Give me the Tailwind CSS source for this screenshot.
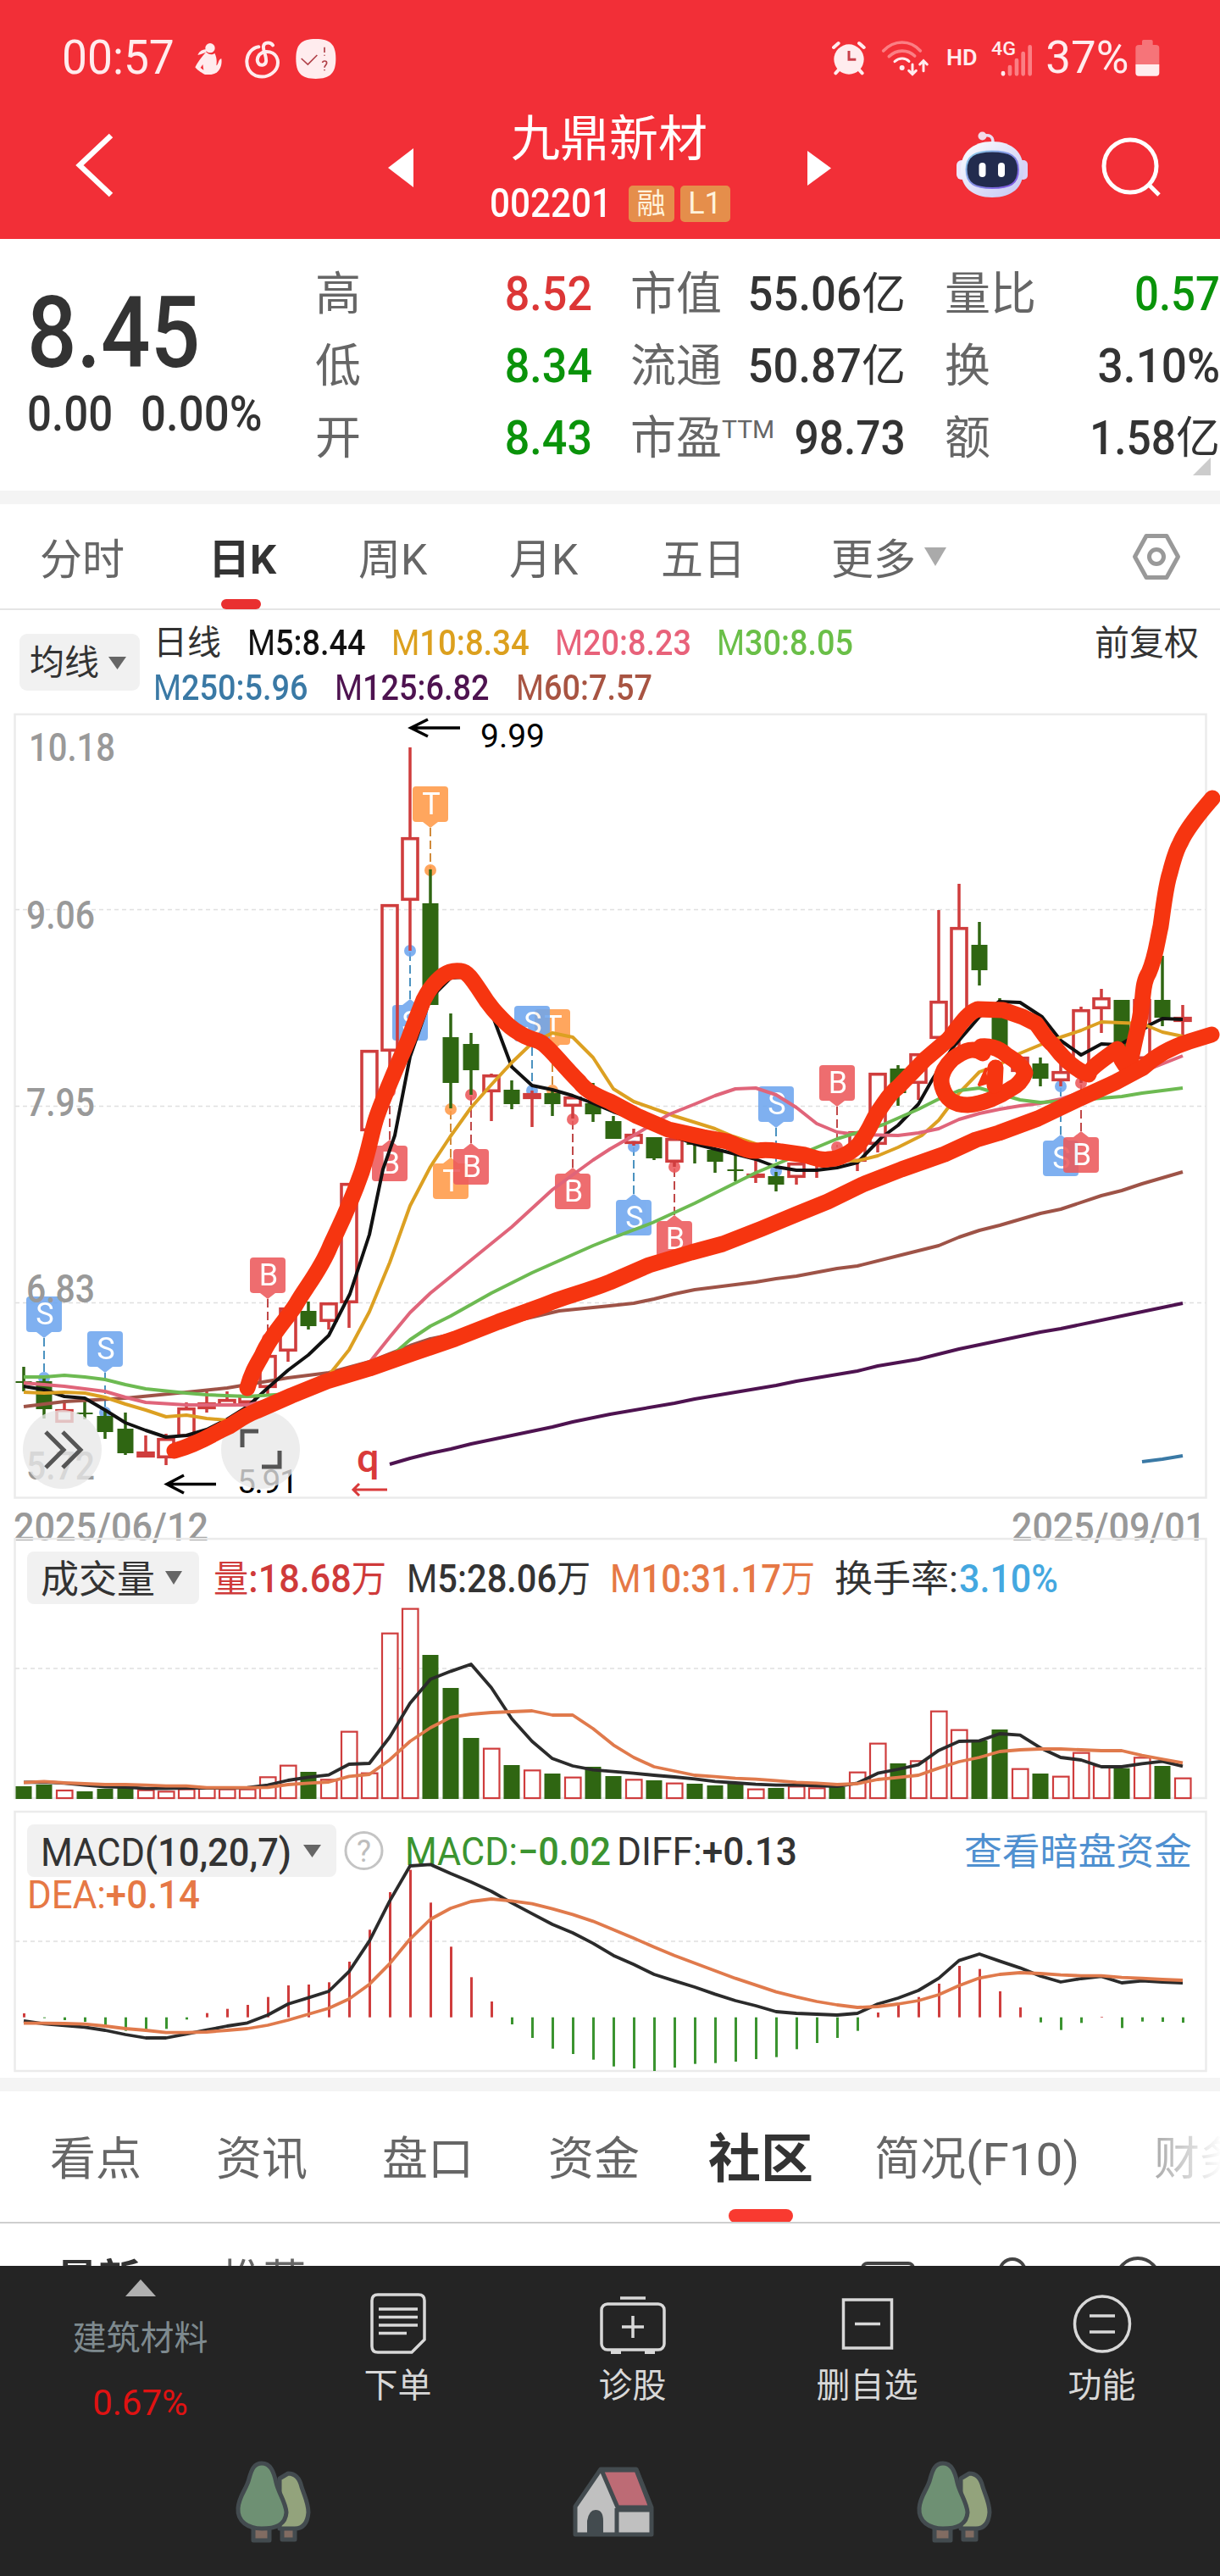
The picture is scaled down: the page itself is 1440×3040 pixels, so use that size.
<!DOCTYPE html>
<html lang="zh-CN">
  <head>
    <meta charset="UTF-8" />
    <meta name="viewport" content="width=device-width, initial-scale=1.0" />
    <title>九鼎新材 002201</title>
    <script src="https://cdn.jsdelivr.net/npm/@tailwindcss/browser@4"></script>
  </head>
  <body class="bg-white">
    <div class="w-[1440px] h-[3040px] overflow-hidden flex flex-col bg-white text-[#333] font-['Roboto','Noto_Sans_CJK_SC',sans-serif]">

      <!-- Header -->
      <header class="h-[282px] shrink-0 bg-[#f22f37] text-white">
        <div class="h-[134px] pt-[40px] flex items-start justify-between text-[#ffecee]">
          <div class="flex items-start pl-[73px]">
            <span class="w-[153px] text-[55px] leading-[56px] whitespace-nowrap origin-left scale-x-[.97]">00:57</span>
            <svg class="w-[176px] h-[54px]" viewBox="500 30 528 162" fill="none">
              <g fill="#ffecee">
                <circle cx="566" cy="80" r="17" />
                <path d="M522 104C530 88 545 82 556 86L550 96C540 98 534 105 522 104Z" />
                <path d="M552 94C560 104 574 106 582 98C590 112 590 130 588 142C596 140 595 118 606 118C610 145 596 172 570 174H548C532 166 518 156 513 148C522 130 536 112 552 94Z" />
                <path d="M540 138L532 150L543 158Z" fill="#f22f37" />
                <path d="M940 48C992 48 1011 68 1011 118S992 189 940 189S870 168 870 118S888 48 940 48Z" />
              </g>
              <path d="M738 76C688 84 680 158 728 178C772 192 812 160 805 122C798 92 760 84 740 104C726 122 736 142 752 140C768 138 766 120 760 100C752 78 752 66 766 62C776 60 784 64 788 70" stroke="#ffecee" stroke-width="12" stroke-linecap="round" />
              <path d="M889 117L912 138L945 105M971 77V96M971 104V107M964 132C965 124 979 124 979 133C979 140 971 141 971 149M971 156V160" stroke="#b04048" stroke-width="5" />
            </svg>
          </div>
          <svg class="w-[400px] h-[54px] mr-[68px]" viewBox="35 30 1200 162" fill="none">
            <g stroke="#ffecee" stroke-width="12" stroke-linecap="round">
              <circle cx="125" cy="120" r="53" fill="#ffecee" stroke="none" />
              <path d="M71 78L88 63M178 78L161 63M88 158L78 169M162 158L172 169" />
              <path d="M125 90V121H150" stroke="#c8404a" stroke-width="9" stroke-linecap="butt" />
            </g>
            <g stroke-linecap="round" stroke-width="11">
              <path d="M247 90C285 50 342 50 378 90M267 110C294 84 332 84 358 108" stroke="#fb7f84" />
              <path d="M287 128C303 113 325 114 338 127M350 138V172M337 160L350 173L363 160M389 161V127M376 138L389 125L402 138" stroke="#ffecee" stroke-width="9" />
            </g>
            <circle cx="313" cy="150" r="9" fill="#ffecee" />
            <text x="470" y="142" font-size="80" font-weight="600" fill="#ffecee" textLength="110" lengthAdjust="spacingAndGlyphs">HD</text>
            <text x="629" y="104" font-size="66" font-weight="500" fill="#ffecee" textLength="87" lengthAdjust="spacingAndGlyphs">4G</text>
            <g stroke="#fb7f84" stroke-width="14" stroke-linecap="round">
              <path d="M695 147V172M719 123V172M742 99V172M766 76V172" />
              <path d="M671 168V172" stroke="#ffecee" />
            </g>
            <text x="822" y="168" font-size="162" fill="#ffecee" textLength="294" lengthAdjust="spacingAndGlyphs">37%</text>
            <path d="M1163 69V56Q1163 51 1168 51H1196Q1201 51 1201 56V69H1212Q1224 69 1224 80V138H1140V80Q1140 69 1152 69Z" fill="#f67479" />
            <path d="M1140 138H1224V168Q1224 179 1213 179H1151Q1140 179 1140 168Z" fill="#ffecee" />
          </svg>
        </div>
        <div class="flex h-[148px] items-start">
          <svg class="ml-[86px] mt-[20px] w-[50px] h-[82px]" viewBox="86 154 50 82" fill="none">
            <path d="M131 160L94 195L131 230" stroke="#fff" stroke-width="6.5" />
          </svg>
          <svg class="ml-[322px] mt-[41px] w-[30px] h-[46px]" viewBox="0 0 30 46"><path d="M30 0V46L0 23Z" fill="#fff" /></svg>
          <div class="w-[465px] flex flex-col items-center">
            <h1 class="text-[58px] leading-[61px] mr-[3px]">九鼎新材</h1>
            <div class="mt-[20px] flex w-[286px] items-center gap-[7px]">
              <span class="w-[157px] text-[48px] leading-[50px] font-medium origin-left scale-x-[.88]">002201</span>
              <span class="w-[54px] h-[43px] rounded-[5px] bg-[#e58e4b] text-[#fff3dc] text-[34px] leading-[43px] text-center shrink-0">融</span>
              <span class="w-[59px] h-[43px] rounded-[5px] bg-[#e58e4b] text-[#fff3dc] text-[36px] leading-[43px] text-center shrink-0">L1</span>
            </div>
          </div>
          <svg class="mt-[44px] w-[28px] h-[41px]" viewBox="0 0 28 41"><path d="M0 0V41L28 20.500Z" fill="#fff" /></svg>
          <svg class="ml-[145px] mt-[18px] w-[90px] h-[84px]" viewBox="1126 152 90 84" fill="none">
            <defs>
              <linearGradient id="shell" x1="0" y1="0" x2="1" y2="1">
                <stop offset="0" stop-color="#ffffff" />
                <stop offset="1" stop-color="#c3c5f3" />
              </linearGradient>
              <linearGradient id="rim" x1="0" y1="0" x2="1" y2="1">
                <stop offset="0" stop-color="#8fd3ea" />
                <stop offset="1" stop-color="#7a4be0" />
              </linearGradient>
            </defs>
            <path d="M1159 161C1168 158 1172 161 1172 168" stroke="#eadcf0" stroke-width="3.500" />
            <circle cx="1159.500" cy="160.500" r="5" fill="#f3dbe8" />
            <rect x="1129" y="189" width="12" height="23" rx="6" fill="#eee6fb" />
            <rect x="1202" y="189" width="11" height="23" rx="5" fill="#d9d2f8" />
            <path d="M1171 167C1195 167 1208 180 1208 200C1208 221 1195 233 1171 233C1148 233 1134 221 1134 200C1134 180 1148 167 1171 167Z" fill="url(#shell)" />
            <path d="M1171 178.500C1192 178.500 1202 184 1202 200C1202 217 1192 222 1171 222C1151 222 1140.500 217 1140.500 200C1140.500 184 1151 178.500 1171 178.500Z" fill="#222b4e" stroke="url(#rim)" stroke-width="2" />
            <rect x="1155.500" y="192" width="8" height="17" rx="4" fill="#fff" />
            <rect x="1178" y="192" width="8" height="17" rx="4" fill="#fff" />
          </svg>
          <svg class="ml-[82px] mt-[24px] w-[76px] h-[76px]" viewBox="1298 158 76 76" fill="none">
            <circle cx="1334" cy="196" r="31" stroke="#fff" stroke-width="5" />
            <path d="M1356 218L1368 230" stroke="#fff" stroke-width="5" />
          </svg>
        </div>
      </header>

      <!-- Quote -->
      <section class="h-[297px] shrink-0 flex relative font-medium">
        <div class="w-[372px] pl-[32px]">
          <div class="mt-[61px] text-[117px] leading-[100px] origin-left scale-x-[.88]">8.45</div>
          <div class="mt-[15px] text-[58px] leading-[60px] whitespace-pre flex">
            <span class="w-[134px] origin-left scale-x-[.88]">0.00</span>
            <span class="origin-left scale-x-[.91]">0.00%</span>
          </div>
        </div>
        <div class="w-[327px] pt-[23px] text-[56px] leading-[85px] text-[#0a930a]">
          <div class="flex justify-between"><span class="font-normal text-[54px] text-[#666]">高</span><span class="origin-right scale-x-[.93] text-[#dc3636]">8.52</span></div>
          <div class="flex justify-between"><span class="font-normal text-[54px] text-[#666]">低</span><span class="origin-right scale-x-[.93]">8.34</span></div>
          <div class="flex justify-between"><span class="font-normal text-[54px] text-[#666]">开</span><span class="origin-right scale-x-[.93]">8.43</span></div>
        </div>
        <div class="ml-[45px] w-[325px] pt-[23px] text-[56px] leading-[85px]">
          <div class="flex justify-between"><span class="font-normal text-[54px] text-[#666]">市值</span><span class="flex justify-end"><span class="origin-right scale-x-[.94]">55.06</span><span class="font-normal text-[52px] w-[52px]">亿</span></span></div>
          <div class="flex justify-between"><span class="font-normal text-[54px] text-[#666]">流通</span><span class="flex justify-end"><span class="origin-right scale-x-[.94]">50.87</span><span class="font-normal text-[52px] w-[52px]">亿</span></span></div>
          <div class="flex justify-between"><span class="font-normal text-[54px] text-[#666] flex">市盈<span class="text-[30px] leading-[64px] font-normal">TTM</span></span><span class="origin-right scale-x-[.92]">98.73</span></div>
        </div>
        <div class="ml-[46px] w-[325px] pt-[23px] text-[56px] leading-[85px]">
          <div class="flex justify-between"><span class="font-normal text-[54px] text-[#666]">量比</span><span class="origin-right scale-x-[.91] text-[#0a930a]">0.57</span></div>
          <div class="flex justify-between"><span class="font-normal text-[54px] text-[#666]">换</span><span class="origin-right scale-x-[.95]">3.10%</span></div>
          <div class="flex justify-between"><span class="font-normal text-[54px] text-[#666]">额</span><span class="flex justify-end"><span class="origin-right scale-x-[.92]">1.58</span><span class="font-normal text-[52px] w-[52px]">亿</span></span></div>
        </div>
        <svg class="absolute right-[11px] bottom-[18px] w-[21px] h-[21px]" viewBox="0 0 21 21"><path d="M0 21H21V0Z" fill="#ccc" /></svg>
      </section>
      <div class="h-[16px] shrink-0 bg-[#f4f4f4]"></div>

      <!-- Period tabs -->
      <nav class="h-[125px] shrink-0 flex pl-[47px] pt-[35px] text-[50px] leading-[62px] text-[#666] border-b-2 border-[#e5e5e5]">
        <span class="w-[199px]">分时</span>
        <span class="w-[177px] font-bold text-[#333] text-[49px]">日K
          <i class="block w-[47px] h-[12px] rounded-full bg-[#e93030] ml-[15px] mt-[15px]"></i>
        </span>
        <span class="w-[178px]">周K</span>
        <span class="w-[179px]">月K</span>
        <span class="w-[201px]">五日</span>
        <span class="flex">更多<svg class="ml-[10px] mt-[16px] w-[26px] h-[22px]" viewBox="0 0 26 22"><path d="M0 0H26L13 22Z" fill="#aaa" /></svg></span>
        <svg class="ml-[219px] -mt-[1px] w-[58px] h-[56px] shrink-0" viewBox="0 0 58 56" fill="none" stroke="#999">
          <path d="M17 3.500H41L54.500 28L41 52.500H17L3.500 28Z" stroke-width="5" stroke-linejoin="round" />
          <circle cx="29" cy="28" r="8.500" stroke-width="5" />
        </svg>
      </nav>

      <!-- Moving average legend -->
      <section class="h-[120px] shrink-0 flex text-[42px]">
        <div class="ml-[23px] mt-[28px] w-[142px] h-[67px] rounded-[9px] bg-[#f1f1f1] flex items-center pl-[12px] pt-[2px] text-[41px] leading-[65px]">
          均线<svg class="ml-[11px] w-[21px] h-[15px]" viewBox="0 0 21 15"><path d="M0 0H21L10.500 15Z" fill="#666" /></svg>
        </div>
        <div class="ml-[16px] pt-[12px] w-[1111px] leading-[53px] font-medium whitespace-nowrap">
          <div class="flex">
            <span class="w-[111px] text-[40px] font-normal">日线</span>
            <span class="w-[170px]"><span class="block w-fit origin-left scale-x-[.9] text-[#111]"><span class="font-normal">M</span>5:8.44</span></span>
            <span class="w-[193px]"><span class="block w-fit origin-left scale-x-[.91] text-[#dca01e]"><span class="font-normal">M</span>10:8.34</span></span>
            <span class="w-[191px]"><span class="block w-fit origin-left scale-x-[.9] text-[#e8627a]"><span class="font-normal">M</span>20:8.23</span></span>
            <span><span class="block w-fit origin-left scale-x-[.9] text-[#6abf48]"><span class="font-normal">M</span>30:8.05</span></span>
          </div>
          <div class="flex">
            <span class="w-[214px]"><span class="block w-fit origin-left scale-x-[.9] text-[#3a79a5]"><span class="font-normal">M</span>250:5.96</span></span>
            <span class="w-[214px]"><span class="block w-fit origin-left scale-x-[.9] text-[#4e1350]"><span class="font-normal">M</span>125:6.82</span></span>
            <span><span class="block w-fit origin-left scale-x-[.9] text-[#a85442]"><span class="font-normal">M</span>60:7.57</span></span>
          </div>
        </div>
        <span class="mt-[13px] text-[41px] leading-[53px] whitespace-nowrap">前复权</span>
      </section>

      <!-- Candles -->
      <svg class="w-[1440px] h-[970px] shrink-0 overflow-visible" viewBox="0 840 1440 970" fill="none">
        <rect x="17.500" y="843" width="1406" height="924.500" stroke="#ebebeb" stroke-width="2.500" />
        <path d="M18 1073.500H1423M18 1305.500H1423M18 1537.500H1423" stroke="#e0e0e0" stroke-width="1.500" stroke-dasharray="5 4" />
        <g id="markers"></g>
        <g fill="#999" font-size="46" font-weight="500">
          <text x="34" y="898" textLength="102" lengthAdjust="spacingAndGlyphs">10.18</text>
          <text x="31" y="1096" textLength="81" lengthAdjust="spacingAndGlyphs">9.06</text>
          <text x="31" y="1317" textLength="81" lengthAdjust="spacingAndGlyphs">7.95</text>
          <text x="31" y="1537" textLength="81" lengthAdjust="spacingAndGlyphs">6.83</text>
          <text x="31" y="1746" textLength="81" lengthAdjust="spacingAndGlyphs">5.72</text>
          <text x="16" y="1818" textLength="230" lengthAdjust="spacingAndGlyphs">2025/06/12</text>
          <text x="1194" y="1818" textLength="229" lengthAdjust="spacingAndGlyphs">2025/09/01</text>
        </g>
        <g id="candles"></g>
        <g id="averages" stroke-width="4" stroke-linejoin="round"></g>
        <path d="M543 859H485M505 849L485 859L505 869" stroke="#000" stroke-width="3.500" />
        <path d="M255 1751.500H197M217 1741L197 1751.500L217 1762" stroke="#000" stroke-width="3.500" />
        <text x="567" y="882" font-size="39" fill="#000" textLength="76" lengthAdjust="spacing">9.99</text>
        <text x="280" y="1762" font-size="39" fill="#000" textLength="72" lengthAdjust="spacing">5.91</text>
        <text x="421" y="1737" font-size="47" font-weight="500" fill="#d93a3a">q</text>
        <path d="M457 1758H417M424 1751L417 1758L424 1765" stroke="#d93a3a" stroke-width="3" />
        <circle cx="73.500" cy="1710.500" r="46.500" fill="#e8e8e8" fill-opacity=".78" />
        <circle cx="307.500" cy="1710.500" r="46.500" fill="#e8e8e8" fill-opacity=".78" />
        <g stroke="#555" stroke-width="5">
          <path d="M54 1690L75 1711L54 1732M74 1690L95 1711L74 1732M305 1689H286V1708M330 1712V1731H309" />
        </g>

        <!-- freehand notes -->
        <g stroke="#f63510" stroke-width="19" stroke-linecap="round" stroke-linejoin="round">
          <path d="M292 1638C297 1620 302 1612 309 1600C318 1578 336 1560 349 1540C360 1520 378 1500 390 1470C404 1440 413 1423 427 1383C436 1355 438 1340 443 1323C450 1300 470 1255 482 1227C490 1205 494 1195 500 1180C506 1168 514 1158 523 1151C530 1146 537 1145 544 1146C553 1147 560 1160 567 1170C578 1188 586 1196 597 1207C604 1214 612 1219 620 1223C628 1227 634 1227 640 1231C652 1240 662 1255 684 1277C692 1288 706 1294 720 1300L752 1317L789 1333L830 1342L858 1347C872 1352 880 1359 894 1358C905 1356 915 1358 922 1359L950 1363C960 1366 970 1370 978 1368C990 1368 1006 1360 1014 1350C1028 1332 1030 1320 1037 1311C1045 1300 1050 1290 1060 1283L1092 1250L1119 1227C1130 1215 1140 1196 1154 1191L1184 1192L1207 1200L1223 1208C1232 1220 1236 1228 1243 1233C1252 1245 1266 1262 1285 1268C1286 1262 1295 1255 1319 1238C1322 1250 1328 1258 1333 1263C1336 1250 1334 1250 1337 1240C1342 1215 1346 1205 1347 1190C1350 1175 1348 1160 1356 1148C1364 1130 1366 1110 1370 1093C1374 1065 1376 1045 1381 1030C1384 1018 1388 1004 1393 995C1402 975 1420 955 1431 942" />
          <path d="M206 1712C240 1702 250 1692 271 1683C285 1674 290 1670 303 1665L344 1647L386 1630L436 1615L487 1597L537 1580L588 1560L643 1540C665 1530 690 1525 720 1513L766 1493L816 1478L853 1468L899 1450L940 1433L977 1418L1018 1398L1064 1380L1115 1362L1152 1345L1179 1337L1225 1320L1271 1298L1317 1277L1349 1260C1365 1245 1385 1235 1404 1229L1430 1221" />
          <path d="M1160 1243C1150 1236 1140 1238 1124 1250C1112 1262 1109 1272 1112 1282C1116 1296 1124 1304 1142 1304C1160 1303 1180 1294 1193 1285C1203 1280 1208 1272 1210 1266C1206 1256 1196 1250 1188 1245C1178 1236 1166 1234 1158 1235" />
          <path d="M1175 1260L1174 1281" />
          <path d="M1164 1262L1156 1280L1166 1277" stroke-width="4" fill="#f63510" />
        </g>
      </svg>

      <!-- Volume -->
      <svg class="w-[1440px] h-[320px] shrink-0 overflow-visible" viewBox="0 1810 1440 320" fill="none">
        <rect x="17.500" y="1816" width="1406" height="306" stroke="#ebebeb" stroke-width="2.500" />
        <path d="M18 1969H1423" stroke="#e0e0e0" stroke-width="1.500" stroke-dasharray="5 4" />
        <rect x="32" y="1831" width="203" height="62" rx="8" fill="#f1f1f1" />
        <g font-size="46" font-weight="500" fill="#333">
          <text x="48" y="1880" font-size="45" font-weight="400">成交量</text>
          <path d="M195 1854H215L205 1870Z" fill="#666" />
          <text x="252" y="1879" fill="#cf3a3a" textLength="204" lengthAdjust="spacingAndGlyphs"><tspan font-weight="400" font-size="44">量</tspan>:18.68<tspan font-weight="400" font-size="44">万</tspan></text>
          <text x="480" y="1879" textLength="217" lengthAdjust="spacingAndGlyphs"><tspan font-weight="400">M</tspan>5:28.06<tspan font-weight="400" font-size="44">万</tspan></text>
          <text x="720" y="1879" fill="#e67845" textLength="242" lengthAdjust="spacingAndGlyphs"><tspan font-weight="400">M</tspan>10:31.17<tspan font-weight="400" font-size="44">万</tspan></text>
          <text x="985" y="1879" font-size="44" font-weight="400" textLength="146" lengthAdjust="spacingAndGlyphs">换手率:</text>
          <text x="1132" y="1879" fill="#44a8e0" textLength="117" lengthAdjust="spacingAndGlyphs">3.10%</text>
        </g>
        <g id="volume"></g>
      </svg>

      <!-- MACD -->
      <svg class="w-[1440px] h-[322px] shrink-0" viewBox="0 2130 1440 322" fill="none">
        <rect x="17.500" y="2138" width="1406" height="306" stroke="#ebebeb" stroke-width="2.500" />
        <path d="M18 2291H1423" stroke="#e0e0e0" stroke-width="1.500" stroke-dasharray="5 4" />
        <rect x="32" y="2153" width="365" height="62" rx="8" fill="#f1f1f1" />
        <g font-size="46" fill="#333">
          <text x="48" y="2202" textLength="296" lengthAdjust="spacingAndGlyphs">MACD<tspan font-weight="500">(10,20,7)</tspan></text>
          <path d="M358 2177H379L368.500 2192Z" fill="#666" />
          <circle cx="429.500" cy="2184" r="21.500" fill="none" stroke="#c4c4c4" stroke-width="3" />
          <text x="429.500" y="2197" font-size="36" fill="#bdbdbd" text-anchor="middle">?</text>
          <text x="478" y="2201" fill="#3b9430" textLength="243" lengthAdjust="spacingAndGlyphs">MACD:<tspan font-weight="500">−0.02</tspan></text>
          <text x="728" y="2201" textLength="213" lengthAdjust="spacingAndGlyphs">DIFF:<tspan font-weight="500">+0.13</tspan></text>
          <text x="1138" y="2201" font-size="44.800" fill="#4f90d0">查看暗盘资金</text>
          <text x="32" y="2252" fill="#e67845" textLength="204" lengthAdjust="spacingAndGlyphs">DEA:<tspan font-weight="500">+0.14</tspan></text>
        </g>
        <g id="macd"></g>
      </svg>
      <div class="h-[16px] shrink-0 bg-[#f4f4f4]"></div>

      <!-- Content tabs -->
      <nav class="h-[156px] shrink-0 flex text-[54px] leading-[76px] text-[#666] border-b-2 border-[#cfcfcf] pl-[59px] pt-[43px] whitespace-nowrap overflow-hidden">
        <span class="w-[196px] shrink-0">看点</span>
        <span class="w-[196px] shrink-0">资讯</span>
        <span class="w-[196px] shrink-0">盘口</span>
        <span class="w-[189px] shrink-0">资金</span>
        <span class="w-[196px] shrink-0 text-[62px] font-bold text-[#333]">社区
          <i class="block w-[76px] h-[16px] rounded-full bg-[#f93a30] ml-[24px] mt-[20px]"></i>
        </span>
        <span class="w-[330px] shrink-0">简况<span class="inline-block origin-left scale-x-[1.05]">(F10)</span></span>
        <span class="shrink-0 bg-linear-to-r from-[#aaa] to-white to-[80px] bg-clip-text text-transparent">财务</span>
      </nav>
      <section class="h-[50px] shrink-0 overflow-hidden flex pl-[66px] pt-[35px] text-[50px] leading-[64px] whitespace-nowrap">
        <span class="w-[195px] shrink-0 font-bold">最新</span>
        <span class="w-[751px] shrink-0 text-[#666]">推荐</span>
        <svg class="w-[360px] h-[60px] shrink-0" viewBox="1012 2659 360 60" fill="none" stroke="#444" stroke-width="4">
          <rect x="1018" y="2671" width="60" height="40" rx="6" />
          <circle cx="1195" cy="2681" r="15" />
          <circle cx="1343" cy="2690" r="25" />
        </svg>
      </section>

      <!-- Bottom bar -->
      <footer class="h-[366px] shrink-0 bg-[#242424] text-[#d8d8d8] text-[40px]">
        <div class="flex h-[206px]">
          <div class="w-[331px] flex flex-col items-center">
            <svg class="mt-[16px] w-[36px] h-[20px]" viewBox="0 0 36 20"><path d="M0 20L18 0L36 20Z" fill="#b0b0b0" /></svg>
            <span class="mt-[20px] leading-[60px] text-[#7e8a8f]">建筑材料</span>
            <span class="mt-[16px] text-[42px] leading-[60px] text-[#e01212]">0.67%</span>
          </div>
          <div class="w-[277px] flex flex-col items-center pt-[31px]">
            <svg class="w-[68px] h-[74px]" viewBox="0 0 68 74" fill="none" stroke="#d8d8d8" stroke-width="3.500">
              <path d="M10 3H58Q65 3 65 10V56L50 71H10Q3 71 3 64V10Q3 3 10 3Z" />
              <path d="M11 20H57M11 29.500H57M11 39H57M11 48.500H44" />
            </svg>
            <span class="mt-[7px] leading-[60px]">下单</span>
          </div>
          <div class="w-[277px] flex flex-col items-center pt-[31px]">
            <svg class="w-[78px] h-[74px]" viewBox="0 0 78 74" fill="none" stroke="#d8d8d8" stroke-width="3.500">
              <rect x="2" y="14" width="74" height="54" rx="7" />
              <path d="M24 7H54M39 28V54M26 41H52" />
              <path d="M13 71H25M53 71H65" stroke-width="4" />
            </svg>
            <span class="mt-[7px] leading-[60px]">诊股</span>
          </div>
          <div class="w-[277px] flex flex-col items-center pt-[31px]">
            <svg class="w-[64px] h-[74px]" viewBox="0 0 64 74" fill="none" stroke="#d8d8d8" stroke-width="3.500">
              <rect x="3.500" y="9" width="57" height="57" />
              <path d="M17 37.500H47" />
            </svg>
            <span class="mt-[7px] leading-[60px]">删自选</span>
          </div>
          <div class="w-[277px] flex flex-col items-center pt-[31px]">
            <svg class="w-[70px] h-[74px]" viewBox="0 0 70 74" fill="none" stroke="#d8d8d8" stroke-width="3.500">
              <circle cx="35" cy="37.500" r="32.500" />
              <path d="M20 28H50M20 47H50" />
            </svg>
            <span class="mt-[7px] leading-[60px]">功能</span>
          </div>
        </div>
        <!-- system navigation -->
        <div class="flex pt-[22px] items-start">
          <svg class="ml-[274px] w-[97px] h-[104px]" viewBox="274 2902 97 104" stroke="#434b4f" stroke-width="5" stroke-linejoin="round">
            <defs>
              <g id="trees">
                <path d="M333 2978H348V2997H333Z" fill="#816c62" />
                <path d="M340 2919C349 2919 354 2926 356 2935C360 2947 364 2954 364 2965C363 2977 358 2984 348 2984H330V2925Z" fill="#93a37c" />
                <path d="M299 2978H318V2998H299Z" fill="#816c62" />
                <path d="M309 2907C319 2907 323 2916 326 2930C329 2943 337 2952 338 2965C337 2980 325 2984 309 2984C293 2984 280 2976 281 2960C282 2945 291 2938 294 2925C297 2914 300 2907 309 2907Z" fill="#6e9073" />
              </g>
            </defs>
            <use href="#trees" />
          </svg>
          <svg class="ml-[300px] mt-[6px] w-[108px] h-[92px]" viewBox="671 2908 108 92" stroke="#434b4f" stroke-width="5" stroke-linejoin="round">
            <path d="M709 2914H751L769 2959V2991H679V2958Z" fill="#c0c0c0" />
            <path d="M710 2915H751L768 2959H729Z" fill="#bd6b75" />
            <path d="M728 2960V2991M728 2962H769" fill="none" />
            <path d="M694 2990V2975Q696 2963 703 2963Q711 2963 711 2975V2990Z" fill="#434b4f" stroke-width="2" />
          </svg>
          <svg class="ml-[299px] w-[97px] h-[104px]" viewBox="274 2902 97 104" stroke="#434b4f" stroke-width="5" stroke-linejoin="round">
            <use href="#trees" />
          </svg>
        </div>
      </footer>
    </div>

    <script>
      const NS = "http://www.w3.org/2000/svg";
      const RED = "#cf3d3d";
      const GREEN = "#2f6612";
      const xAt = (i) => 28 + i * 24;

      function add(parent, tag, attrs, text) {
        const el = document.createElementNS(NS, tag);
        for (const k in attrs) el.setAttribute(k, attrs[k]);
        if (text) el.textContent = text;
        parent.appendChild(el);
        return el;
      }

      // [up, high, bodyTop, bodyBottom, low]
      const candles = [
        [0,1613,1630,1632,1642],[0,1625,1630,1663,1674],[1,1653,1663,1679,1679],[0,1653,1667,1669,1675],
        [0,1665,1671,1690,1698],[0,1667,1686,1715,1717],[1,1694,1713,1720,1720],[1,1692,1697,1721,1729],
        [1,1655,1661,1696,1696],[1,1642,1655,1663,1667],[1,1642,1651,1660,1660],[1,1640,1646,1656,1656],
        [1,1590,1599,1638,1645],[1,1543,1543,1595,1607],[0,1536,1547,1565,1569],[1,1537,1537,1560,1569],
        [1,1396,1396,1538,1567],[1,1239,1239,1335,1335],[1,1067,1067,1241,1288],[1,882,988,1063,1122],
        [0,1026,1066,1186,1186],[0,1196,1224,1278,1308],[0,1219,1232,1263,1292],[1,1267,1268,1289,1323],
        [0,1275,1286,1303,1309],[1,1287,1290,1297,1330],[0,1287,1290,1303,1317],[1,1294,1294,1306,1320],
        [0,1278,1302,1315,1324],[0,1317,1323,1344,1344],[1,1332,1338,1350,1352],[0,1342,1342,1367,1369],
        [1,1343,1343,1372,1377],[0,1345,1349,1351,1373],[0,1357,1357,1371,1384],[0,1363,1380,1382,1394],
        [1,1368,1385,1390,1396],[0,1383,1388,1398,1406],[1,1372,1372,1390,1398],[1,1365,1366,1373,1390],
        [0,1360,1363,1372,1376],[1,1335,1335,1371,1382],[1,1266,1266,1351,1360],[0,1257,1261,1290,1305],
        [1,1243,1243,1279,1298],[1,1074,1181,1226,1226],[1,1043,1094,1212,1236],[0,1088,1115,1145,1163],
        [0,1178,1190,1245,1245],[1,1247,1247,1265,1265],[0,1248,1255,1273,1282],[1,1253,1264,1276,1282],
        [1,1188,1191,1262,1278],[1,1167,1177,1191,1219],[0,1180,1180,1240,1258],[1,1179,1179,1250,1250],
        [0,1128,1180,1201,1211],[1,1186,1200,1206,1223]
      ];
      const cg = document.getElementById("candles");
      candles.forEach(([up, hi, top, bot, lo], i) => {
        const x = xAt(i);
        if (up) {
          add(cg, "path", { d: `M${x} ${hi}V${top}M${x} ${bot}V${lo}`, stroke: RED, "stroke-width": 3.5 });
          const h = Math.max(bot - top - 3.4, 1);
          add(cg, "rect", { x: x - 9, y: top + 1.7, width: 18, height: h, stroke: RED, "stroke-width": 3.6, fill: h > 4 ? "none" : RED });
        } else {
          add(cg, "path", { d: `M${x} ${hi}V${lo}`, stroke: GREEN, "stroke-width": 3.5 });
          add(cg, "rect", { x: x - 9.5, y: top, width: 19, height: bot - top, fill: GREEN });
        }
      });

      // [letter, candle, boxTop, dotY]
      const markers = [
        ["T",20,928,1027],["S",19,1186,1122],["T",26,1191,1287],["S",25,1187,1287],["B",18,1352,1288],
        ["T",21,1373,1309],["B",22,1356,1292],["B",27,1385,1321],["B",12,1484,1580],["S",1,1530,1626],
        ["S",4,1571,1667],["S",30,1416,1353],["B",32,1441,1377],["S",37,1282,1382],["B",40,1257,1354],
        ["S",51,1346,1282],["B",52,1342,1278]
      ];
      const fills = { S: "#6ea6ee", B: "#ec5a5c", T: "#ff9a48" };
      const dashes = { S: "#4b92c0", B: "#c04848", T: "#d08a3a" };
      const mg = document.getElementById("markers");
      markers.forEach(([t, i, top, dot]) => {
        const x = xAt(i);
        const below = top > dot;
        const edge = below ? top : top + 42;
        const tip = below ? top - 7 : top + 49;
        add(mg, "path", { d: `M${x} ${tip}V${dot}`, stroke: dashes[t], "stroke-width": 2, "stroke-dasharray": "10 5" });
        const g = add(mg, "g", { opacity: 0.88 });
        add(g, "circle", { cx: x, cy: dot, r: 7, fill: fills[t] });
        add(g, "path", { d: `M${x - 9} ${edge}L${x} ${tip}L${x + 9} ${edge}Z`, fill: fills[t] });
        add(g, "rect", { x: x - 21, y: top, width: 42, height: 42, rx: 4, fill: fills[t] });
        add(g, "text", { x: x + 1, y: top + 33, "font-size": 36, fill: "#fff", "text-anchor": "middle" }, t);
      });

      const averages = [
        ["#9e5347", "28,1660 76,1654 148,1650 220,1643 268,1638 316,1630 340,1626 388,1620 436,1607 484,1588 508,1580 556,1570 604,1560 660,1547 720,1541 748,1538 772,1533 796,1527 820,1522 892,1513 916,1509 940,1506 988,1497 1012,1494 1060,1482 1108,1470 1132,1460 1156,1452 1180,1446 1228,1432 1252,1427 1300,1411 1324,1405 1348,1397 1396,1383"],
        ["#4e1350", "460,1728 484,1721 508,1715 532,1710 556,1704 604,1694 652,1684 676,1678 720,1669 796,1656 820,1651 916,1635 940,1630 1012,1618 1036,1612 1084,1604 1132,1592 1228,1572 1252,1568 1324,1553 1396,1538"],
        ["#3a79a5", "1348,1725 1372,1722 1396,1718"],
        ["#111", "28,1636 52,1640 76,1648 100,1650 124,1664 148,1679 172,1688 196,1696 220,1694 244,1687 268,1675 292,1660 316,1638 340,1617 364,1599 388,1576 413,1527 436,1457 452,1380 466,1340 484,1247 508,1178 532,1154 548,1153 560,1166 583,1203 604,1259 628,1281 652,1286 676,1293 700,1302 724,1312 748,1320 793,1340 820,1350 892,1368 916,1377 940,1381 964,1381 988,1378 1012,1372 1041,1342 1060,1328 1084,1303 1101,1273 1124,1237 1156,1200 1179,1182 1204,1183 1230,1200 1252,1228 1276,1245 1300,1232 1322,1233 1335,1225 1356,1210 1372,1202 1396,1203"],
        ["#dca022", "28,1643 52,1644 76,1643 100,1644 124,1649 148,1657 172,1664 196,1672 220,1670 244,1674 268,1676 292,1676 340,1655 388,1623 412,1593 436,1548 460,1490 484,1423 508,1377 531,1342 556,1307 580,1280 604,1254 628,1231 652,1219 676,1224 700,1248 724,1285 748,1300 796,1317 844,1332 865,1341 892,1350 940,1362 988,1369 1012,1370 1036,1364 1060,1354 1088,1340 1108,1322 1132,1290 1156,1265 1180,1256 1204,1243 1228,1233 1252,1224 1276,1216 1300,1206 1348,1208 1372,1218 1396,1223"],
        ["#e0657a", "28,1632 76,1636 124,1642 148,1649 172,1655 220,1658 292,1658 340,1648 388,1630 436,1608 460,1578 484,1549 508,1526 556,1487 604,1448 652,1404 700,1369 720,1356 748,1340 790,1315 820,1303 844,1293 868,1285 892,1284 916,1292 940,1307 964,1326 988,1336 1012,1339 1060,1340 1084,1337 1108,1332 1132,1321 1156,1314 1180,1309 1204,1305 1228,1302 1252,1297 1276,1289 1324,1273 1348,1265 1396,1246"],
        ["#6dba52", "28,1625 52,1625 76,1623 100,1625 124,1628 148,1634 172,1639 220,1644 244,1646 292,1648 340,1645 388,1632 440,1615 460,1602 484,1581 508,1565 532,1553 580,1526 628,1502 700,1470 720,1462 770,1443 820,1420 892,1384 940,1364 988,1344 1043,1327 1084,1309 1108,1297 1132,1287 1156,1284 1180,1291 1204,1298 1228,1301 1276,1298 1324,1294 1348,1290 1396,1284"]
      ];
      const ag = document.getElementById("averages");
      averages.forEach(([color, points]) => add(ag, "polyline", { points, stroke: color }));

      function line(parent, values, base, color) {
        const points = values.map((v, i) => `${xAt(i)},${base + v / 3}`).join(" ");
        add(parent, "polyline", { points, stroke: color, "stroke-width": 3.8, "stroke-linejoin": "round" });
      }

      // positive = up bar, negative = down bar
      const volume = [
        -864,-858,876,-882,-873,-870,875,880,872,870,872,872,829,788,-813,838,668,815,320,233,
        -399,-516,-693,728,-789,805,-819,830,-795,-828,838,-843,851,-855,-861,-853,872,-870,862,868,
        -866,812,710,-783,772,596,662,-702,-663,800,-819,827,743,790,-800,760,-792,833
      ];
      const vg = document.getElementById("volume");
      volume.forEach((v, i) => {
        const top = 1820 + Math.abs(v) / 3;
        const h = 2123 - top;
        if (v > 0) add(vg, "rect", { x: xAt(i) - 9, y: top + 1, width: 18.5, height: h - 2, stroke: RED, "stroke-width": 2.2, fill: "#fff" });
        else add(vg, "rect", { x: xAt(i) - 9.5, y: top, width: 19, height: h, fill: GREEN });
      });
      line(vg, [850,849,853,860,866,867,872,872,870,870,870,869,860,843,832,824,786,783,690,570,485,457,432,515,625,705,766,792,806,812,818,825,831,838,847,852,857,860,860,862,864,853,818,804,788,737,705,703,678,683,728,762,771,795,795,784,776,793], 1820, "#2b2b2b");
      line(vg, [851,847,852,855,858,858,860,863,863,869,869,869,868,858,853,849,829,822,770,705,657,620,609,603,600,597,612,612,660,718,762,795,810,825,830,836,839,844,850,853,858,855,840,833,825,800,777,762,741,735,732,732,735,738,738,755,768,781], 1820, "#e07a4c");

      const macd = [
        738,755,762,768,783,800,803,793,760,737,722,708,680,639,636,628,555,442,309,230,
        346,502,610,696,777,825,863,882,902,926,933,942,930,917,914,909,900,893,865,843,
        825,800,735,708,680,633,570,581,660,717,770,797,772,750,790,767,768,771
      ];
      const dg = document.getElementById("macd");
      macd.forEach((v, i) => {
        add(dg, "path", { d: `M${xAt(i) + 0.5} 2380.7V${2130 + v / 3}`, stroke: v < 752 ? RED : "#3b9430", "stroke-width": 3 });
      });
      line(dg, [765,775,781,787,798,813,825,825,811,797,783,772,744,705,683,660,590,482,340,216,211,243,273,306,347,385,423,453,490,533,565,600,623,645,670,693,711,732,738,741,744,738,705,684,657,614,551,528,553,577,606,627,615,607,630,623,627,630], 2130, "#2b2b2b");
      line(dg, [773,773,774,776,783,792,798,806,806,804,798,792,780,762,741,720,687,635,562,475,405,366,342,333,340,350,368,388,412,442,472,503,533,560,587,614,638,662,680,696,708,717,714,705,693,672,640,613,600,594,597,602,605,605,611,614,618,621], 2130, "#e07a4c");
    </script>
  </body>
</html>
